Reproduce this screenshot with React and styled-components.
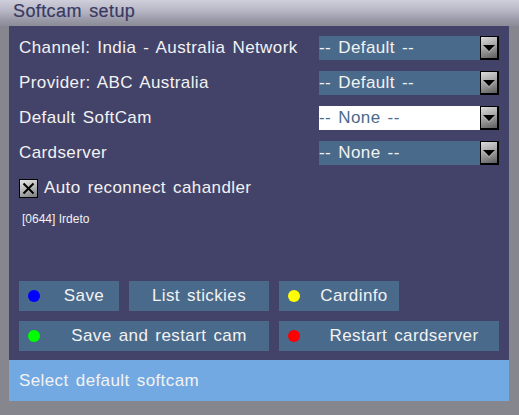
import React, { useState } from 'react';
import styled, { createGlobalStyle } from 'styled-components';

const GlobalStyle = createGlobalStyle`
  html, body {
    margin: 0;
    padding: 0;
    background: #86868f;
  }
  * {
    box-sizing: border-box;
  }
`;

const Screen = styled.div`
  width: 519px;
  height: 415px;
  display: flex;
  flex-direction: column;
  background: #86868f;
  font-family: "Liberation Sans", Arial, sans-serif;
  overflow: hidden;
`;

const TitleBar = styled.div`
  height: 26px;
  padding-left: 13px;
  display: flex;
  align-items: center;
  background: linear-gradient(180deg, #cfcfdc 0%, #b4b4c2 45%, #9a9aa8 75%, #8c8c98 100%);
  color: #393963;
  font-size: 18px;
  letter-spacing: 0.4px;
  word-spacing: 2px;
  line-height: 1;
  padding-bottom: 5px;
  -webkit-text-stroke: 0.2px #393963;
`;

const Body = styled.div`
  display: flex;
  flex-direction: column;
  margin-left: 9px;
  width: 500px;
`;

const Panel = styled.div`
  height: 334px;
  background: #434369;
  padding: 10px 10px 9px 10px;
  display: flex;
  flex-direction: column;
`;

const Form = styled.div`
  display: flex;
  flex-direction: column;
  gap: 11px;
`;

const Row = styled.div`
  height: 24px;
  display: flex;
  align-items: center;
  justify-content: space-between;
`;

const Label = styled.span`
  color: #f2f2f2;
  font-size: 17px;
  letter-spacing: 0.4px;
  word-spacing: 2px;
  white-space: nowrap;
`;

const Select = styled.div`
  width: 180px;
  height: 24px;
  display: flex;
  align-items: center;
  background: ${p => (p.$active ? '#ffffff' : '#4a6a8b')};
  color: ${p => (p.$active ? '#4a6a8b' : '#f2f2f2')};
  font-size: 17px;
  letter-spacing: 0.4px;
  word-spacing: 2px;
  white-space: nowrap;
`;

const SelectValue = styled.span`
  flex: 1;
`;

const ArrowButton = styled.div`
  width: 19px;
  height: 24px;
  border: 1px solid #000;
  border-right-width: 2px;
  border-bottom-width: 2px;
  background: linear-gradient(160deg, #dcdcdc 0%, #a8a8a8 45%, #5c5c5c 100%);
  display: flex;
  align-items: center;
  justify-content: center;
`;

const CheckRow = styled.div`
  height: 24px;
  display: flex;
  align-items: center;
  gap: 6px;
`;

const CheckBox = styled.div`
  width: 19px;
  height: 19px;
  border: 1px solid #000;
  background: linear-gradient(160deg, #e8e8e8 0%, #b8b8b8 50%, #7c7c7c 100%);
  display: flex;
  align-items: center;
  justify-content: center;
`;

const Info = styled.div`
  margin-top: 12px;
  padding-left: 3px;
  color: #f2f2f2;
  font-size: 12px;
`;

const Buttons = styled.div`
  margin-top: auto;
  display: flex;
  flex-direction: column;
  gap: 10px;
`;

const ButtonRow = styled.div`
  display: flex;
  gap: 10px;
`;

const Button = styled.div`
  width: ${p => p.$w}px;
  height: 30px;
  background: #4a6a8b;
  display: flex;
  align-items: center;
  padding-left: ${p => (p.$dot ? 9 : 0)}px;
  color: #f2f2f2;
  font-size: 17px;
  letter-spacing: 0.4px;
  word-spacing: 2px;
  white-space: nowrap;
`;

const Dot = styled.span`
  width: 12px;
  height: 12px;
  border-radius: 50%;
  background: ${p => p.$color};
  margin-right: 9px;
  flex-shrink: 0;
`;

const ButtonText = styled.span`
  flex: 1;
  text-align: center;
`;

const StatusBar = styled.div`
  height: 41px;
  background: #72a9e2;
  display: flex;
  align-items: center;
  padding-left: 10px;
  color: #f2f2f2;
  font-size: 17px;
  letter-spacing: 0.4px;
  word-spacing: 2px;
`;

const DownArrow = () => (
  <svg width="14" height="10" viewBox="0 0 14 10">
    <polygon points="1,2 13,2 7,8" fill="#000" />
    <polyline points="2,3.5 7,9.5 12,3.5" fill="none" stroke="#d8d8d8" strokeWidth="0.8" opacity="0.5" />
  </svg>
);

const CrossMark = () => (
  <svg width="13" height="13" viewBox="0 0 13 13">
    <path d="M1.5 1.5 L11.5 11.5 M11.5 1.5 L1.5 11.5" stroke="#000" strokeWidth="2" />
  </svg>
);

const settings = [
  { label: 'Channel: India - Australia Network', value: '-- Default --' },
  { label: 'Provider: ABC Australia', value: '-- Default --' },
  { label: 'Default SoftCam', value: '-- None --' },
  { label: 'Cardserver', value: '-- None --' },
];

const App = () => {
  const [active] = useState(2);
  const [reconnect] = useState(true);

  return (
    <Screen>
      <GlobalStyle />
      <TitleBar>Softcam setup</TitleBar>
      <Body>
        <Panel>
          <Form>
            {settings.map((s, i) => (
              <Row key={s.label}>
                <Label>{s.label}</Label>
                <Select $active={i === active}>
                  <SelectValue>{s.value}</SelectValue>
                  <ArrowButton>
                    <DownArrow />
                  </ArrowButton>
                </Select>
              </Row>
            ))}
            <CheckRow>
              <CheckBox>{reconnect && <CrossMark />}</CheckBox>
              <Label>Auto reconnect cahandler</Label>
            </CheckRow>
          </Form>
          <Info>[0644] Irdeto</Info>

          <Buttons>
            <ButtonRow>
              <Button $w={100} $dot>
                <Dot $color="#0000ff" />
                <ButtonText>Save</ButtonText>
              </Button>
              <Button $w={140}>
                <ButtonText>List stickies</ButtonText>
              </Button>
              <Button $w={120} $dot>
                <Dot $color="#ffff00" />
                <ButtonText>Cardinfo</ButtonText>
              </Button>
            </ButtonRow>
            <ButtonRow>
              <Button $w={250} $dot>
                <Dot $color="#00ff00" />
                <ButtonText>Save and restart cam</ButtonText>
              </Button>
              <Button $w={220} $dot>
                <Dot $color="#ff0000" />
                <ButtonText>Restart cardserver</ButtonText>
              </Button>
            </ButtonRow>
          </Buttons>
        </Panel>
        <StatusBar>Select default softcam</StatusBar>
      </Body>
    </Screen>
  );
};

export default App;
